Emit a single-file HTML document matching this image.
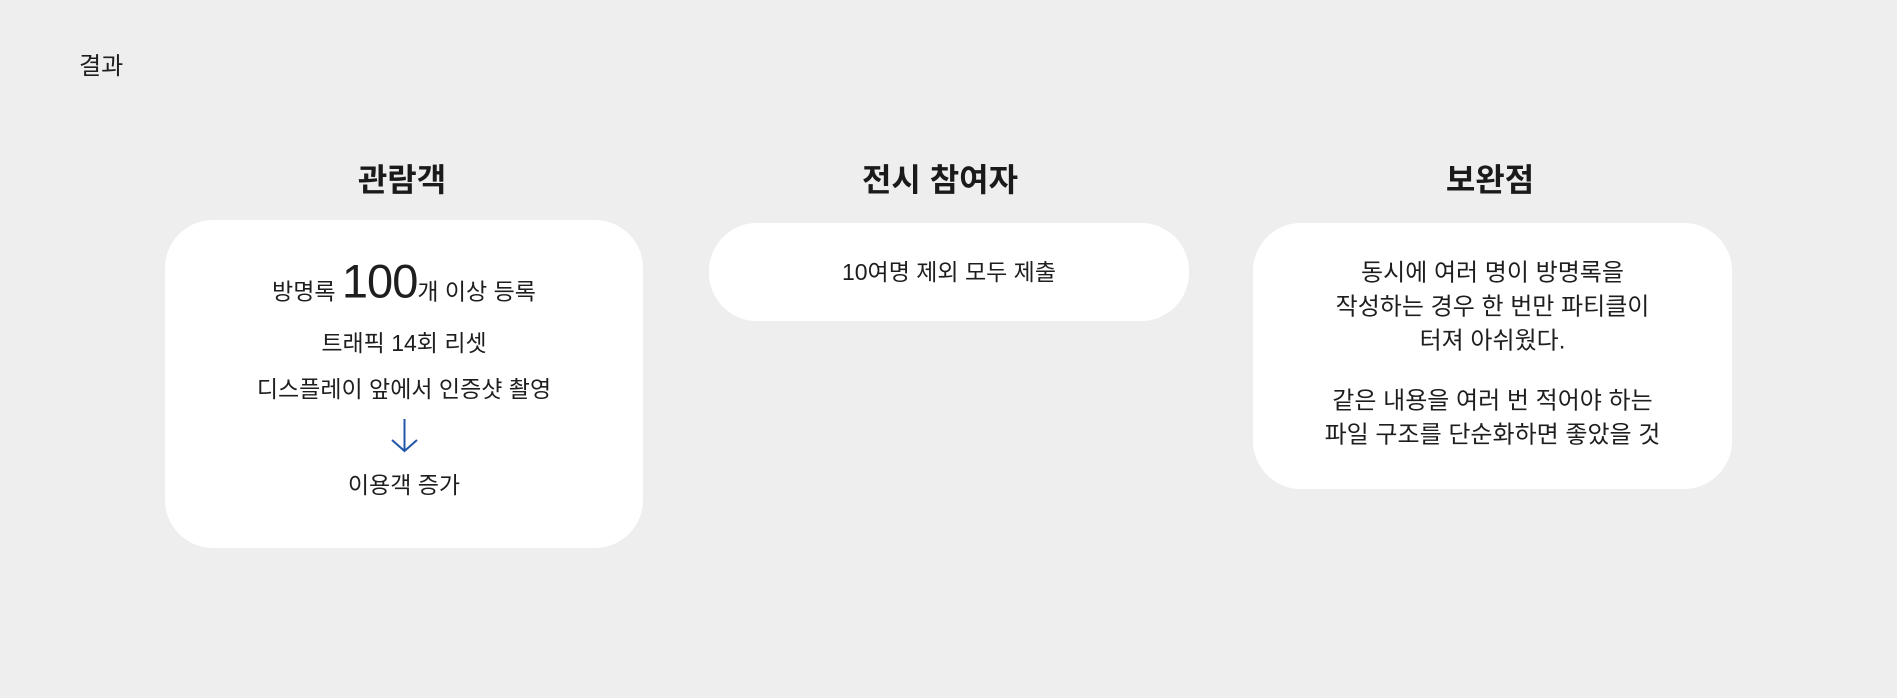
<!DOCTYPE html>
<html><head><meta charset="utf-8"><style>
html,body{margin:0;padding:0}
body{width:1897px;height:698px;background:#eeeeee;position:relative;overflow:hidden;font-family:"Liberation Sans","Noto Sans CJK KR",sans-serif;color:#1e1e1e}
.a{position:absolute;white-space:nowrap}
h2{margin:0;font-size:32px;font-weight:700;position:absolute;transform:translate(-50%,-50%);white-space:nowrap;color:#1a1a1a}
.card{position:absolute;background:#fff;border-radius:48px}
.l{position:absolute;left:0;right:0;text-align:center;font-size:23px;transform:translateY(-50%);white-space:nowrap}
.c3 .l{font-size:24px}
</style></head><body>
<div class="a" style="left:79px;top:50px;font-size:24px;line-height:34px">결과</div>
<h2 style="left:402px;top:178px">관람객</h2>
<h2 style="left:940px;top:178px">전시 참여자</h2>
<h2 style="left:1490px;top:178px">보완점</h2>

<div class="card" style="left:165px;top:220px;width:478px;height:328px">
 <div class="l" style="top:63px"><span style="font-size:23px">방명록 </span><span style="font-size:47px;font-weight:300;letter-spacing:-1px;position:relative;top:-2px">100</span><span>개 이상 등록</span></div>
 <div class="l" style="top:121px">트래픽 14회 리셋</div>
 <div class="l" style="top:167px">디스플레이 앞에서 인증샷 촬영</div>
 <svg style="position:absolute;left:224px;top:198px" width="32" height="36" viewBox="0 0 32 36"><path d="M15.5 1V33M3 22L15.5 33L28 22" fill="none" stroke="#2257a8" stroke-width="2"/></svg>
 <div class="l" style="top:263px">이용객 증가</div>
</div>

<div class="card" style="left:709px;top:223px;width:480px;height:98px">
 <div class="l" style="top:47px">10여명 제외 모두 제출</div>
</div>

<div class="card c3" style="left:1253px;top:223px;width:479px;height:266px">
 <div class="l" style="top:47px">동시에 여러 명이 방명록을</div>
 <div class="l" style="top:81px">작성하는 경우 한 번만 파티클이</div>
 <div class="l" style="top:115px">터져 아쉬웠다.</div>
 <div class="l" style="top:175px">같은 내용을 여러 번 적어야 하는</div>
 <div class="l" style="top:209px">파일 구조를 단순화하면 좋았을 것</div>
</div>
</body></html>
